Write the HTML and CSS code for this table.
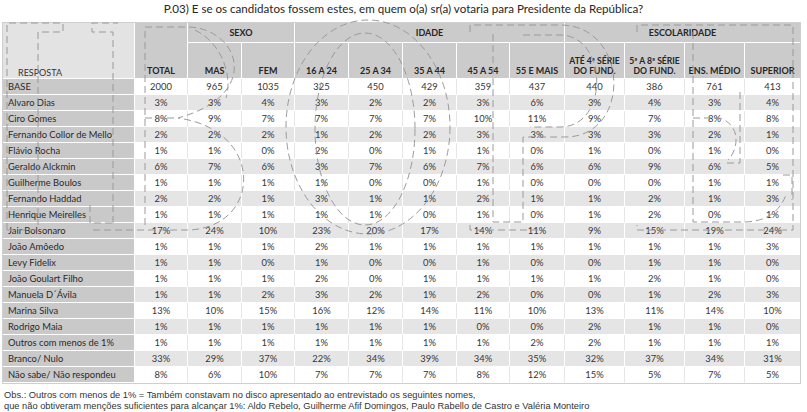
FILE: index.html
```html
<!DOCTYPE html>
<html lang="pt-BR">
<head>
<meta charset="utf-8">
<title>P.03</title>
<link rel="stylesheet" href="styles.css">
</head>
<body>
<div class="page">
  <h1 class="title">P.03) E se os candidatos fossem estes, em quem o(a) sr(a) votaria para Presidente da República?</h1>
  <table class="grid">
    <colgroup>
      <col class="c-lbl"><col class="c-a"><col class="c-b"><col class="c-a"><col class="c-b"><col class="c-b"><col class="c-b"><col class="c-a"><col class="c-c"><col class="c-d"><col class="c-d"><col class="c-d"><col class="c-c">
    </colgroup>
    <thead>
      <tr class="hg">
        <th class="h-lbl" rowspan="2"><span>RESPOSTA</span></th>
        <th class="h-sub" rowspan="2">TOTAL</th>
        <th class="h-grp" colspan="2">SEXO</th>
        <th class="h-grp" colspan="5">IDADE</th>
        <th class="h-grp last" colspan="4">ESCOLARIDADE</th>
      </tr>
      <tr class="hs">
        <th class="h-sub">MAS</th>
        <th class="h-sub">FEM</th>
        <th class="h-sub">16 A 24</th>
        <th class="h-sub">25 A 34</th>
        <th class="h-sub">35 A 44</th>
        <th class="h-sub">45 A 54</th>
        <th class="h-sub">55 E MAIS</th>
        <th class="h-sub two">ATÉ 4ª SÉRIE<br>DO FUND.</th>
        <th class="h-sub two">5ª A 8ª SÉRIE<br>DO FUND.</th>
        <th class="h-sub">ENS. MÉDIO</th>
        <th class="h-sub last">SUPERIOR</th>
      </tr>
    </thead>
    <tbody>
      <tr class="w"><th>BASE</th><td>2000</td><td>965</td><td>1035</td><td>325</td><td>450</td><td>429</td><td>359</td><td>437</td><td>440</td><td>386</td><td>761</td><td>413</td></tr>
      <tr class="g"><th>Alvaro Dias</th><td>3%</td><td>3%</td><td>4%</td><td>3%</td><td>2%</td><td>2%</td><td>3%</td><td>6%</td><td>3%</td><td>4%</td><td>3%</td><td>4%</td></tr>
      <tr class="w"><th>Ciro Gomes</th><td>8%</td><td>9%</td><td>7%</td><td>7%</td><td>7%</td><td>7%</td><td>10%</td><td>11%</td><td>9%</td><td>7%</td><td>8%</td><td>8%</td></tr>
      <tr class="g"><th>Fernando Collor de Mello</th><td>2%</td><td>2%</td><td>2%</td><td>1%</td><td>2%</td><td>2%</td><td>3%</td><td>3%</td><td>3%</td><td>3%</td><td>2%</td><td>1%</td></tr>
      <tr class="w"><th>Flávio Rocha</th><td>1%</td><td>1%</td><td>0%</td><td>2%</td><td>0%</td><td>1%</td><td>1%</td><td>0%</td><td>1%</td><td>0%</td><td>1%</td><td>0%</td></tr>
      <tr class="g"><th>Geraldo Alckmin</th><td>6%</td><td>7%</td><td>6%</td><td>3%</td><td>7%</td><td>6%</td><td>7%</td><td>6%</td><td>6%</td><td>9%</td><td>6%</td><td>5%</td></tr>
      <tr class="w"><th>Guilherme Boulos</th><td>1%</td><td>1%</td><td>1%</td><td>1%</td><td>0%</td><td>0%</td><td>1%</td><td>0%</td><td>0%</td><td>0%</td><td>1%</td><td>1%</td></tr>
      <tr class="g"><th>Fernando Haddad</th><td>2%</td><td>2%</td><td>1%</td><td>3%</td><td>1%</td><td>1%</td><td>2%</td><td>1%</td><td>1%</td><td>2%</td><td>1%</td><td>3%</td></tr>
      <tr class="w"><th>Henrique Meirelles</th><td>1%</td><td>1%</td><td>1%</td><td>1%</td><td>1%</td><td>0%</td><td>1%</td><td>0%</td><td>1%</td><td>2%</td><td>0%</td><td>1%</td></tr>
      <tr class="g"><th>Jair Bolsonaro</th><td>17%</td><td>24%</td><td>10%</td><td>23%</td><td>20%</td><td>17%</td><td>14%</td><td>11%</td><td>9%</td><td>15%</td><td>19%</td><td>24%</td></tr>
      <tr class="w"><th>João Amôedo</th><td>1%</td><td>1%</td><td>1%</td><td>2%</td><td>1%</td><td>1%</td><td>1%</td><td>1%</td><td>1%</td><td>1%</td><td>1%</td><td>3%</td></tr>
      <tr class="g"><th>Levy Fidelix</th><td>1%</td><td>1%</td><td>0%</td><td>1%</td><td>0%</td><td>0%</td><td>1%</td><td>0%</td><td>0%</td><td>1%</td><td>1%</td><td>0%</td></tr>
      <tr class="w"><th>João Goulart Filho</th><td>1%</td><td>1%</td><td>1%</td><td>2%</td><td>0%</td><td>1%</td><td>1%</td><td>1%</td><td>1%</td><td>2%</td><td>1%</td><td>0%</td></tr>
      <tr class="g"><th>Manuela D´Ávila</th><td>1%</td><td>1%</td><td>2%</td><td>3%</td><td>2%</td><td>1%</td><td>2%</td><td>0%</td><td>0%</td><td>1%</td><td>2%</td><td>3%</td></tr>
      <tr class="w"><th>Marina Silva</th><td>13%</td><td>10%</td><td>15%</td><td>16%</td><td>12%</td><td>14%</td><td>11%</td><td>10%</td><td>13%</td><td>11%</td><td>14%</td><td>10%</td></tr>
      <tr class="g"><th>Rodrigo Maia</th><td>1%</td><td>1%</td><td>1%</td><td>1%</td><td>1%</td><td>1%</td><td>0%</td><td>0%</td><td>2%</td><td>1%</td><td>1%</td><td>0%</td></tr>
      <tr class="w"><th>Outros com menos de 1%</th><td>1%</td><td>1%</td><td>1%</td><td>1%</td><td>1%</td><td>1%</td><td>1%</td><td>2%</td><td>2%</td><td>1%</td><td>1%</td><td>1%</td></tr>
      <tr class="g"><th>Branco/ Nulo</th><td>33%</td><td>29%</td><td>37%</td><td>22%</td><td>34%</td><td>39%</td><td>34%</td><td>35%</td><td>32%</td><td>37%</td><td>34%</td><td>31%</td></tr>
      <tr class="w"><th>Não sabe/ Não respondeu</th><td>8%</td><td>6%</td><td>10%</td><td>7%</td><td>7%</td><td>7%</td><td>8%</td><td>12%</td><td>15%</td><td>5%</td><td>7%</td><td>5%</td></tr>
    </tbody>
  </table>
  <p class="obs">Obs.: Outros com menos de 1% = Também constavam no disco apresentado ao entrevistado os seguintes nomes,<br>que não obtiveram menções suficientes para alcançar 1%: Aldo Rebelo, Guilherme Afif Domingos, Paulo Rabello de Castro e Valéria Monteiro</p>
  <svg class="watermark" width="807" height="412" viewBox="0 0 807 412" aria-hidden="true">
    <g fill="none" stroke="#9a9a9a" stroke-width="1" stroke-dasharray="7 4">
      <path d="M7 230 V23 H63 V32 H38 V225"/>
      <path d="M7 230 H40"/>
      <path d="M113 223 V32 H92 V23 H118"/>
      <path d="M90 205 V223 H113"/>
      <path d="M145 225 V27 H190 C240 30 262 95 178 118 C265 130 262 226 190 230 H90"/>
      <path d="M145 118 H178"/>
      <path d="M195 30 C225 45 232 80 226 98"/>
      <ellipse cx="368" cy="127" rx="82" ry="107"/>
      <ellipse cx="365" cy="129" rx="50" ry="96"/>
      <path d="M470 32 V25 H560 C630 25 632 137 565 137 H523 V222 H493 V32"/>
      <path d="M523 35 H560 C608 35 610 127 560 127 H530"/>
      <path d="M470 225 V230 H540"/>
      <path d="M637 32 V25 H793 V230 H637 V225"/>
      <path d="M693 32 V222 H743 C768 222 780 210 786 195"/>
      <path d="M740 92 V163 H725"/>
      <path d="M693 118 H720 C742 126 738 150 728 160"/>
      <path d="M783 175 H792 V200"/>
    </g>
  </svg>
</div>
</body>
</html>
```
FILE: styles.css
```css
body {
  margin: 0;
  background: #fff;
  font-family: Lato, "Open Sans", "DejaVu Sans", sans-serif;
  color: #333;
}
.page {
  position: relative;
  width: 807px;
  height: 412px;
  overflow: hidden;
}
.title {
  margin: 0;
  height: 22px;
  line-height: 17px;
  font-size: 11.6px;
  font-weight: normal;
  text-align: center;
  color: #262626;
}
.grid {
  margin-left: 2px;
  border-collapse: separate;
  border-spacing: 0;
  table-layout: fixed;
  width: 799px;
  border: 1px solid #cfcfcf;
  font-size: 9.4px;
}
.c-lbl { width: 132px; }
.c-a { width: 53px; }
.c-b { width: 54px; }
.c-c { width: 55px; }
.c-d { width: 60px; }

.grid th, .grid td {
  box-sizing: border-box;
  padding: 0;
  border-right: 1px solid #fff;
  border-bottom: 1px solid #fff;
  overflow: hidden;
  white-space: nowrap;
}
.grid tr > :last-child { border-right: 0; }

.hg > th { height: 20px; }
.hs > th { height: 36px; }
.hg > .h-sub, .hg > .h-lbl { height: 56px; }

.h-lbl {
  background: #e3e3e3;
  text-align: left;
  vertical-align: bottom;
  font-weight: normal;
  color: #333;
  font-size: 9px;
}
.h-lbl span { display: block; padding: 0 0 0 15px; line-height: 10px; }
.h-grp {
  background: #cbcbcb;
  font-weight: bold;
  font-size: 9px;
  color: #262626;
  text-align: center;
  vertical-align: middle;
  line-height: 10px;
}
.h-sub {
  background: #cbcbcb;
  font-weight: bold;
  font-size: 9px;
  color: #262626;
  text-align: center;
  vertical-align: bottom;
  line-height: 10px;
  padding-bottom: 2px !important;
}
.h-sub.two { font-size: 8.6px; line-height: 9.5px; }

tbody th {
  height: 16px;
  line-height: 15px;
  background: #c9c9c9;
  text-align: left;
  font-weight: normal;
  color: #2a2a2a;
  padding-left: 5px !important;
}
tbody td {
  height: 16px;
  line-height: 15px;
  text-align: center;
  color: #363636;
}
tr.g td { background: #e5e5e5; }
tr.w td { background: #fff; border-right-color: #e6e6e6; }

.obs {
  margin: 6px 0 0 4px;
  font-family: "Liberation Sans", Arial, sans-serif;
  font-size: 9.3px;
  line-height: 11px;
  color: #333;
}
.watermark {
  position: absolute;
  left: 0;
  top: 0;
  pointer-events: none;
}
```
